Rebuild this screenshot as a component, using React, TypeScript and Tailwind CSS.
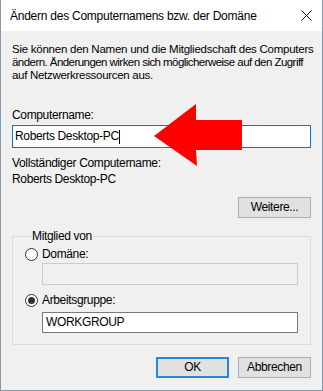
import React from 'react';

// Windows 10 "Ändern des Computernamens bzw. der Domäne" dialog

const font = { fontFamily: '"Liberation Sans", Arial, sans-serif' };

function Radio({ checked, label }: { checked?: boolean; label: string }) {
  return (
    <div className="flex items-center h-[13px] leading-[13px]">
      <span className="w-[13px] h-[13px] rounded-full border border-[#333333] bg-white flex items-center justify-center flex-shrink-0">
        {checked && <span className="w-[7px] h-[7px] rounded-full bg-[#333333]" />}
      </span>
      <span className="ml-[4px]">{label}</span>
    </div>
  );
}

function Button({ label, isDefault }: { label: string; isDefault?: boolean }) {
  const border = isDefault
    ? 'border-2 border-[#2a86d8]'
    : 'border border-[#adadad]';
  return (
    <div className={`w-[73px] h-[21px] bg-[#e1e1e1] ${border} flex items-center justify-center`}>
      {label}
    </div>
  );
}

export default function App() {
  return (
    <div
      className="relative w-[323px] h-[391px] overflow-hidden bg-[#f0f0f0] border-x border-b border-[#8a98ab] text-[12px] tracking-[-0.35px] text-black flex flex-col"
      style={font}
    >
      {/* title bar */}
      <div className="h-[31px] bg-white flex items-center justify-between pl-[9px] pr-[10px] flex-shrink-0">
        <span className="text-[12px] tracking-[-0.25px]">Ändern des Computernamens bzw. der Domäne</span>
        <svg width="11" height="11" viewBox="0 0 11 11">
          <path d="M0.5 0.5 L10.5 10.5 M10.5 0.5 L0.5 10.5" stroke="#111" strokeWidth="1" />
        </svg>
      </div>

      <div className="flex flex-col pl-[11px] pr-[11px] pt-[12px] leading-[13px]">
        <div className="whitespace-nowrap text-[11.5px]">
          <div className="tracking-[-0.25px]">Sie können den Namen und die Mitgliedschaft des Computers</div>
          <div className="tracking-[-0.55px]">ändern. Änderungen wirken sich möglicherweise auf den Zugriff</div>
          <div className="tracking-[-0.3px]">auf Netzwerkressourcen aus.</div>
        </div>

        <div className="mt-[27px]">Computername:</div>
        <div className="mt-[3px] h-[23px] bg-white border border-[#0078d7] flex items-center pl-[2px]">
          <span>Roberts Desktop-PC</span>
          <span className="w-px h-[14px] bg-black" />
        </div>

        <div className="mt-[9px]">Vollständiger Computername:</div>
        <div className="mt-[3px]">Roberts Desktop-PC</div>

        <div className="mt-[11px] flex justify-end">
          <Button label="Weitere..." />
        </div>

        <fieldset className="mt-[12px] border border-[#dcdcdc] pl-[12px] pr-[12px] pb-[11px]">
          <legend className="ml-[6px] px-[1px] leading-[13px]">Mitglied von</legend>
          <div className="mt-[5px]">
            <Radio label="Domäne:" />
          </div>
          <div className="mt-[2px] ml-[17px] h-[22px] border border-[#cccccc] bg-[#f0f0f0]" />
          <div className="mt-[9px]">
            <Radio checked label="Arbeitsgruppe:" />
          </div>
          <div className="mt-[5px] ml-[17px] h-[21px] border border-[#7a7a7a] bg-white flex items-center pl-[3px]">
            WORKGROUP
          </div>
        </fieldset>

        <div className="mt-[12px] flex justify-end gap-[9px]">
          <Button label="OK" isDefault />
          <Button label="Abbrechen" />
        </div>
      </div>

      {/* red annotation arrow */}
      <svg className="absolute left-0 top-0 pointer-events-none" width="323" height="391">
        <polygon points="153,136 195,104 195,120 241,120 241,150 195,150 196,166" fill="#ff0000" />
      </svg>
    </div>
  );
}
